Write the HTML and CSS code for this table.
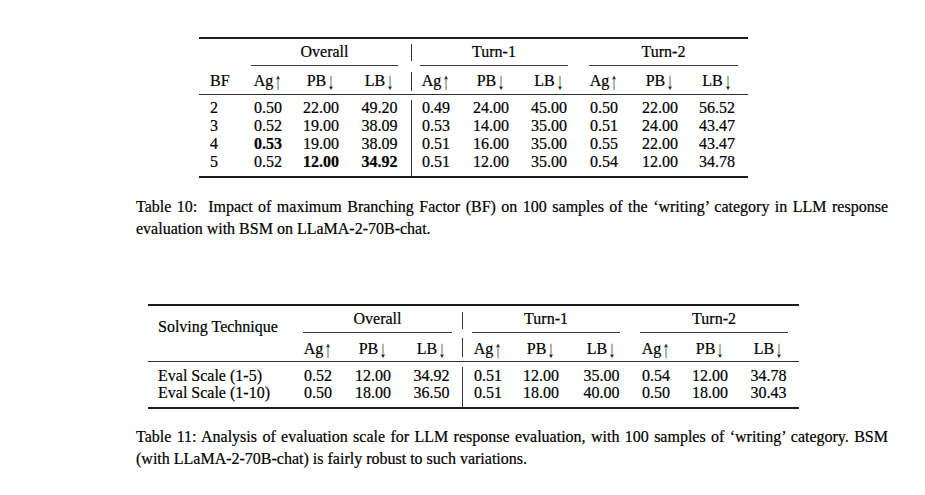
FILE: index.html
```html
<!DOCTYPE html>
<html lang="en">
<head>
<meta charset="utf-8">
<title>Tables</title>
<link rel="stylesheet" href="styles.css">
</head>
<body>
<main class="page">
  <figure class="fig fig1">
    <table class="tbl t1">
      <colgroup>
        <col class="w-bf"><col class="w-oa"><col class="w-ob"><col class="w-oc"><col class="w-bar">
        <col class="w-1a"><col class="w-1b"><col class="w-1c"><col class="w-2a"><col class="w-2b"><col class="w-2c">
      </colgroup>
      <thead>
        <tr class="h1">
          <th class="lab"></th>
          <th colspan="3"><div class="grp g-ov">Overall</div></th>
          <th class="vb"></th>
          <th colspan="3"><div class="grp g-t1">Turn-1</div></th>
          <th colspan="3"><div class="grp g-t2">Turn-2</div></th>
        </tr>
        <tr class="h2">
          <th class="lab">BF</th>
          <th>Ag<span class="arr">↑</span></th><th>PB<span class="arr">↓</span></th><th>LB<span class="arr">↓</span></th>
          <th class="vb"></th>
          <th>Ag<span class="arr">↑</span></th><th>PB<span class="arr">↓</span></th><th>LB<span class="arr">↓</span></th>
          <th>Ag<span class="arr">↑</span></th><th>PB<span class="arr">↓</span></th><th>LB<span class="arr">↓</span></th>
        </tr>
      </thead>
      <tbody>
        <tr class="first">
          <td class="lab">2</td><td>0.50</td><td>22.00</td><td>49.20</td><td class="vb"></td>
          <td>0.49</td><td>24.00</td><td>45.00</td><td>0.50</td><td>22.00</td><td>56.52</td>
        </tr>
        <tr>
          <td class="lab">3</td><td>0.52</td><td>19.00</td><td>38.09</td><td class="vb"></td>
          <td>0.53</td><td>14.00</td><td>35.00</td><td>0.51</td><td>24.00</td><td>43.47</td>
        </tr>
        <tr>
          <td class="lab">4</td><td class="b">0.53</td><td>19.00</td><td>38.09</td><td class="vb"></td>
          <td>0.51</td><td>16.00</td><td>35.00</td><td>0.55</td><td>22.00</td><td>43.47</td>
        </tr>
        <tr class="last">
          <td class="lab">5</td><td>0.52</td><td class="b">12.00</td><td class="b">34.92</td><td class="vb"></td>
          <td>0.51</td><td>12.00</td><td>35.00</td><td>0.54</td><td>12.00</td><td>34.78</td>
        </tr>
      </tbody>
    </table>
    <figcaption class="cap cap1">Table 10:&nbsp; Impact of maximum Branching Factor (BF) on 100 samples of the ‘writing’ category in LLM response evaluation with BSM on LLaMA-2-70B-chat.</figcaption>
  </figure>

  <figure class="fig fig2">
    <table class="tbl t2">
      <colgroup>
        <col class="w-st"><col class="w-oa"><col class="w-ob"><col class="w-oc"><col class="w-bar">
        <col class="w-1a"><col class="w-1b"><col class="w-1c"><col class="w-2a"><col class="w-2b"><col class="w-2c">
      </colgroup>
      <thead>
        <tr class="h1">
          <th class="lab st" rowspan="2">Solving Technique</th>
          <th colspan="3"><div class="grp g-ov">Overall</div></th>
          <th class="vb"></th>
          <th colspan="3"><div class="grp g-t1">Turn-1</div></th>
          <th colspan="3"><div class="grp g-t2">Turn-2</div></th>
        </tr>
        <tr class="h2">
          <th>Ag<span class="arr">↑</span></th><th>PB<span class="arr">↓</span></th><th>LB<span class="arr">↓</span></th>
          <th class="vb"></th>
          <th>Ag<span class="arr">↑</span></th><th>PB<span class="arr">↓</span></th><th>LB<span class="arr">↓</span></th>
          <th>Ag<span class="arr">↑</span></th><th>PB<span class="arr">↓</span></th><th>LB<span class="arr">↓</span></th>
        </tr>
      </thead>
      <tbody>
        <tr class="first">
          <td class="lab">Eval Scale (1-5)</td><td>0.52</td><td>12.00</td><td>34.92</td><td class="vb"></td>
          <td>0.51</td><td>12.00</td><td>35.00</td><td>0.54</td><td>12.00</td><td>34.78</td>
        </tr>
        <tr class="last">
          <td class="lab">Eval Scale (1-10)</td><td>0.50</td><td>18.00</td><td>36.50</td><td class="vb"></td>
          <td>0.51</td><td>18.00</td><td>40.00</td><td>0.50</td><td>18.00</td><td>30.43</td>
        </tr>
      </tbody>
    </table>
    <figcaption class="cap cap2">Table 11: Analysis of evaluation scale for LLM response evaluation, with 100 samples of ‘writing’ category. BSM (with LLaMA-2-70B-chat) is fairly robust to such variations.</figcaption>
  </figure>
</main>
</body>
</html>
```

FILE: styles.css
```css
html, body {
  margin: 0;
  padding: 0;
  background: #ffffff;
}

body {
  font-family: "Liberation Serif", "DejaVu Serif", "Times New Roman", serif;
  font-size: 16px;
  color: #000000;
  -webkit-text-stroke: 0.2px #000000;
}

.page {
  display: flex;
  flex-direction: column;
  align-items: flex-start;
}

.fig {
  margin: 0;
  display: flex;
  flex-direction: column;
  align-items: flex-start;
}

.fig1 { margin-top: 37px; }
.fig2 { margin-top: 64px; }

/* ---------- tables ---------- */
.tbl {
  border-collapse: separate;
  border-spacing: 0;
  table-layout: fixed;
  font-size: 16px;
  color: #000000;
}

.tbl th,
.tbl td {
  padding: 0;
  font-weight: normal;
  text-align: center;
  white-space: nowrap;
  line-height: 18px;
  vertical-align: top;
}

.tbl .b { font-weight: bold; }

.tbl .arr {
  display: inline-block;
  margin-left: 1px;
  -webkit-text-stroke: 0;
  transform: translateY(2px) scale(0.9, 1.5);
  transform-origin: 50% 70%;
}

.tbl th.lab,
.tbl td.lab { text-align: left; padding-left: 11px; }

/* toprule */
.tbl tr.h1 > th { border-top: 2px solid #1c1c1c; padding-top: 4px; }
.tbl .grp { padding-bottom: 4px; border-bottom: 1px solid #3a3a3a; }

/* second header row + midrule */
.tbl tr.h2 > th { padding-top: 6px; padding-bottom: 4px; border-bottom: 1px solid #2e2e2e; }

/* data rows */
.tbl tr.first > td { padding-top: 4px; }
.tbl tr.last > td { padding-bottom: 5px; border-bottom: 2px solid #1c1c1c; }

/* vertical separator */
.tbl .vb {
  background-image: linear-gradient(#333333, #333333);
  background-repeat: no-repeat;
  background-size: 1px 100%;
  background-position: 50% 0;
}
.tbl tr.h1 > .vb { background-size: 1px calc(100% - 10px); background-position: 50% 5px; }
.tbl tr.h2 > .vb { background-size: 1px 19px; background-position: 50% 6px; }
.tbl tr.first > .vb { background-size: 1px calc(100% - 5px); background-position: 50% 5px; }

/* table 10 geometry */
.t1 { width: 549px; margin-left: 199px; }
.t1 .w-bf { width: 46px; }
.t1 .w-oa { width: 46px; }
.t1 .w-ob { width: 60px; }
.t1 .w-oc { width: 57px; }
.t1 .w-bar { width: 6px; }
.t1 .w-1a { width: 44px; }
.t1 .w-1b { width: 66px; }
.t1 .w-1c { width: 50px; }
.t1 .w-2a { width: 60px; }
.t1 .w-2b { width: 52px; }
.t1 .w-2c { width: 62px; }
.t1 .g-ov { margin: 0 10px 0 6px; }
.t1 .g-t1 { margin: 0 6px 0 6px; }
.t1 .g-t2 { margin: 0 10px 0 15px; }

/* table 11 geometry */
.t2 { width: 651px; margin-left: 148px; }
.t2 th.lab, .t2 td.lab { padding-left: 10px; }
.t2 .w-st { width: 148px; }
.t2 .w-oa { width: 44px; }
.t2 .w-ob { width: 66px; }
.t2 .w-oc { width: 51px; }
.t2 .w-bar { width: 10px; }
.t2 .w-1a { width: 42px; }
.t2 .w-1b { width: 64px; }
.t2 .w-1c { width: 57px; }
.t2 .w-2a { width: 52px; }
.t2 .w-2b { width: 56px; }
.t2 .w-2c { width: 61px; }
.t2 .g-ov { margin: 0 5px 0 7px; }
.t2 .g-t1 { margin: 0 10px 0 5px; }
.t2 .g-t2 { margin: 0 11px 0 10px; }
.t2 tr.h1 > th.st { padding-top: 12px; border-bottom: 1px solid #2e2e2e; }
.t2 tr.h2 > th { padding-top: 7px; padding-bottom: 3px; }
.t2 tbody td { line-height: 17px; }
.t2 tr.first > td { padding-top: 5px; }
.t2 tr.last > td { padding-bottom: 6px; }
.t2 tr.h1 > .vb { background-size: 1px 17px; background-position: 50% 6px; }
.t2 tr.h2 > .vb { background-size: 1px 19px; background-position: 50% 5px; }

/* ---------- captions ---------- */
.cap {
  margin-left: 136px;
  width: 752px;
  font-size: 16px;
  line-height: 22px;
  text-align: justify;
  color: #000000;
}
.cap1 { margin-top: 18px; }
.cap2 { margin-top: 17px; }
```
